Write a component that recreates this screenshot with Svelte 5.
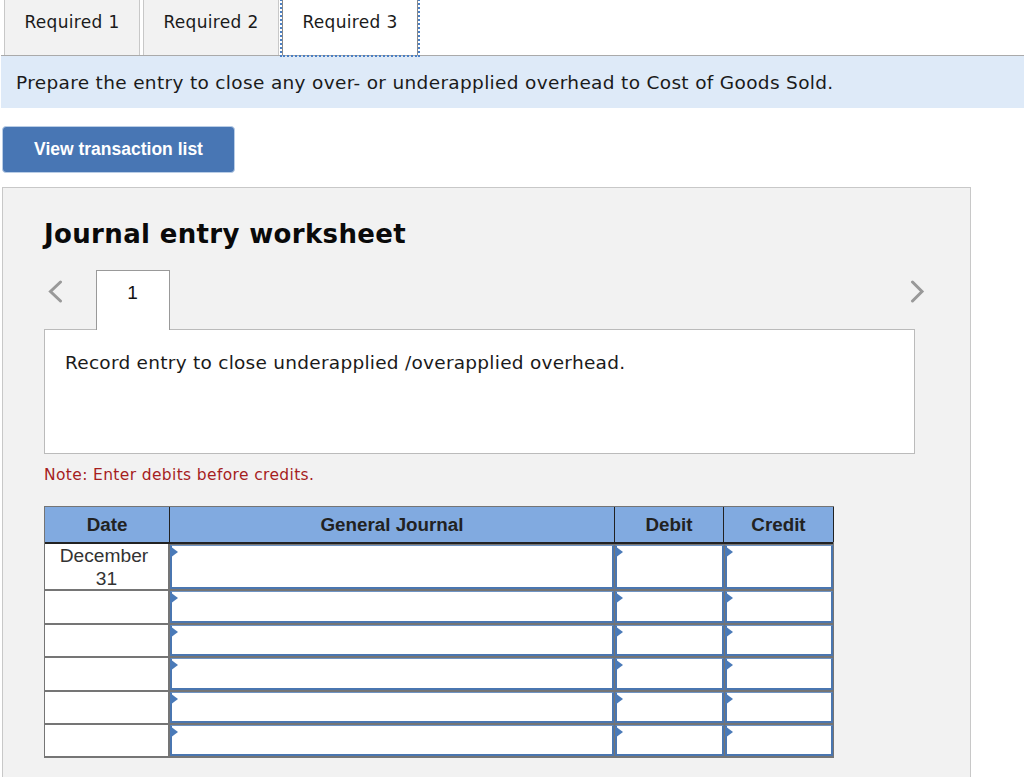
<script>
  const tabs = ['Required 1', 'Required 2', 'Required 3'];
  const rows = [
    { date: ['December', '31'], h: 'r46' },
    { date: [], h: 'r34' },
    { date: [], h: 'r33' },
    { date: [], h: 'r34' },
    { date: [], h: 'r33' },
    { date: [], h: 'r33' }
  ];
</script>

<main class="page">
  <nav class="tabs">
    {#each tabs as t, i}
      <div class="tab" class:active={i === 2}>{t}</div>
    {/each}
  </nav>
  <p class="banner">Prepare the entry to close any over- or underapplied overhead to Cost of Goods Sold.</p>
  <button class="view">View transaction list</button>

  <section class="panel">
    <h2>Journal entry worksheet</h2>
    <div class="pager">
      <svg class="chev" width="16" height="24" viewBox="0 0 16 24"><path d="M13.5 3 L3.5 12.5 L13.5 22" fill="none" stroke="#999" stroke-width="3" stroke-linecap="round" stroke-linejoin="miter"/></svg>
      <div class="pagetab">1</div>
      <svg class="chev next" width="16" height="24" viewBox="0 0 16 24"><path d="M2.5 3 L12 12.5 L2.5 22" fill="none" stroke="#999" stroke-width="3" stroke-linecap="round" stroke-linejoin="miter"/></svg>
    </div>
    <div class="desc">Record entry to close underapplied /overapplied overhead.</div>
    <p class="note">Note: Enter debits before credits.</p>

    <div class="journal">
      <div class="row head">
        <div class="h hdate">Date</div>
        <div class="h hgj">General Journal</div>
        <div class="h hdebit">Debit</div>
        <div class="h hcredit">Credit</div>
      </div>
      {#each rows as r, i}
        <div class="row {r.h}">
          <div class="date" class:first={i === 0}>{#each r.date as d}<span>{d}</span>{/each}</div>
          <div class="input gj"><i></i></div>
          <div class="input debit"><i></i></div>
          <div class="input credit"><i></i></div>
        </div>
      {/each}
    </div>
  </section>
</main>

<style>
  :global(body) { margin: 0; background: #fff; }
  .page {
    width: 1024px; height: 777px; overflow: hidden; box-sizing: border-box;
    font-family: "DejaVu Sans", Verdana, sans-serif; color: #111;
  }
  .tabs {
    display: flex; align-items: flex-start; gap: 3px; height: 55px; margin-left: 1px; padding-left: 3px;
    border-bottom: 1px solid #aaa;
  }
  .tab {
    width: 136px; box-sizing: border-box; height: 55px;
    background: #f2f2f2; border: 1px solid #c8c8c8; border-top: 0; border-bottom: 0;
    text-align: center; font-size: 17px; letter-spacing: 0.33px; line-height: 45px; color: #1a1a1a;
  }
  .tab.active {
    background: #fff; height: 59px; margin-top: -4px; line-height: 53px;
    border-color: #8a8a8a; outline: 2px dotted #4a7fc4;
  }
  .banner {
    margin: 0 0 0 1px; height: 52px; background: #deeaf8; padding-left: 15px;
    font-size: 18.5px; letter-spacing: 0.33px; line-height: 53px; white-space: nowrap; color: #1a1a1a;
  }
  .view {
    display: block; margin: 18px 0 14px 2px; width: 233px; height: 47px; padding: 0;
    background: #4876b4; color: #fff; border: 1px solid #b9cde6; border-radius: 4px;
    font-family: "Liberation Sans", Arial, sans-serif; font-weight: 700; font-size: 17.5px;
  }
  .panel {
    margin-left: 2px; width: 969px; height: 620px; box-sizing: border-box;
    background: #f2f2f2; border: 1px solid #c8c8c8; padding: 0 0 0 41px;
  }
  h2 {
    margin: 29px 0 0; font-size: 26px; letter-spacing: 0.35px; line-height: 34px; font-weight: 700; color: #0a0a0a; white-space: nowrap;
  }
  .pager {
    display: flex; align-items: flex-start; width: 870px; height: 60px; margin-top: 19px;
    position: relative; z-index: 1;
  }
  .chev { margin: 9px 0 0 3px; flex: none; }
  .chev.next { margin: 9px -12px 0 auto; }
  .pagetab {
    margin-left: 33px; width: 74px; height: 60px; box-sizing: border-box;
    background: #fff; border: 1px solid #999; border-bottom: 0;
    font: 19px/44px "Liberation Sans", Arial, sans-serif; text-align: center; padding-right: 1px; color: #111;
  }
  .desc {
    width: 871px; height: 125px; box-sizing: border-box; margin-top: -1px;
    background: #fff; border: 1px solid #bbb; padding: 20px 0 0 20px;
    font-size: 18.5px; letter-spacing: 0.26px; line-height: 26px; color: #1a1a1a; white-space: nowrap;
  }
  .note {
    margin: 10px 0 0; font-size: 15.5px; letter-spacing: 0.36px; line-height: 22px; color: #a61e1e; white-space: nowrap;
  }
  .journal {
    margin-top: 20px; width: 790px; box-sizing: border-box;
    border: 1px solid #757575; background: #757575;
    font-family: "Liberation Sans", Arial, sans-serif;
  }
  .row { display: flex; align-items: stretch; }
  .head { height: 37px; box-sizing: border-box; background: #81aae0; border-bottom: 2px solid #222; }
  .r46 { height: 46px; }
  .r34 { height: 34px; }
  .r33 { height: 33px; }
  .h {
    flex: none; box-sizing: border-box; border-right: 1px solid #222;
    text-align: center; font-weight: 700; font-size: 18.8px; line-height: 36px; color: #222;
  }
  .hdate { width: 125px; }
  .hgj { width: 445px; }
  .hdebit { width: 109px; }
  .hcredit { width: 110px; }
  .date {
    flex: none; box-sizing: border-box; width: 124px;
    display: flex; flex-direction: column; align-items: center;
    background: #fff; border-right: 1px solid #757575; border-top: 1px solid #757575; border-bottom: 1px solid #757575;
    font-size: 19.2px; line-height: 22.5px; color: #333;
  }
  .date.first { border-top: 0; padding-top: 1px; }
  .date span:first-child:not(:last-child) { margin-right: 5px; }
  .input {
    flex: none; box-sizing: border-box; position: relative; margin: 1px 0 1px 1px; background: #fff;
    border: 2px solid #4a76b0; border-top: 1px solid #6f94c4;
  }
  .gj { width: 444px; }
  .debit { width: 109px; }
  .credit { width: 108px; }
  .input i {
    position: absolute; left: -2px; top: 0; width: 0; height: 0;
    border-left: 8px solid #4a7ab8; border-top: 6px solid transparent; border-bottom: 6px solid transparent;
  }
</style>
